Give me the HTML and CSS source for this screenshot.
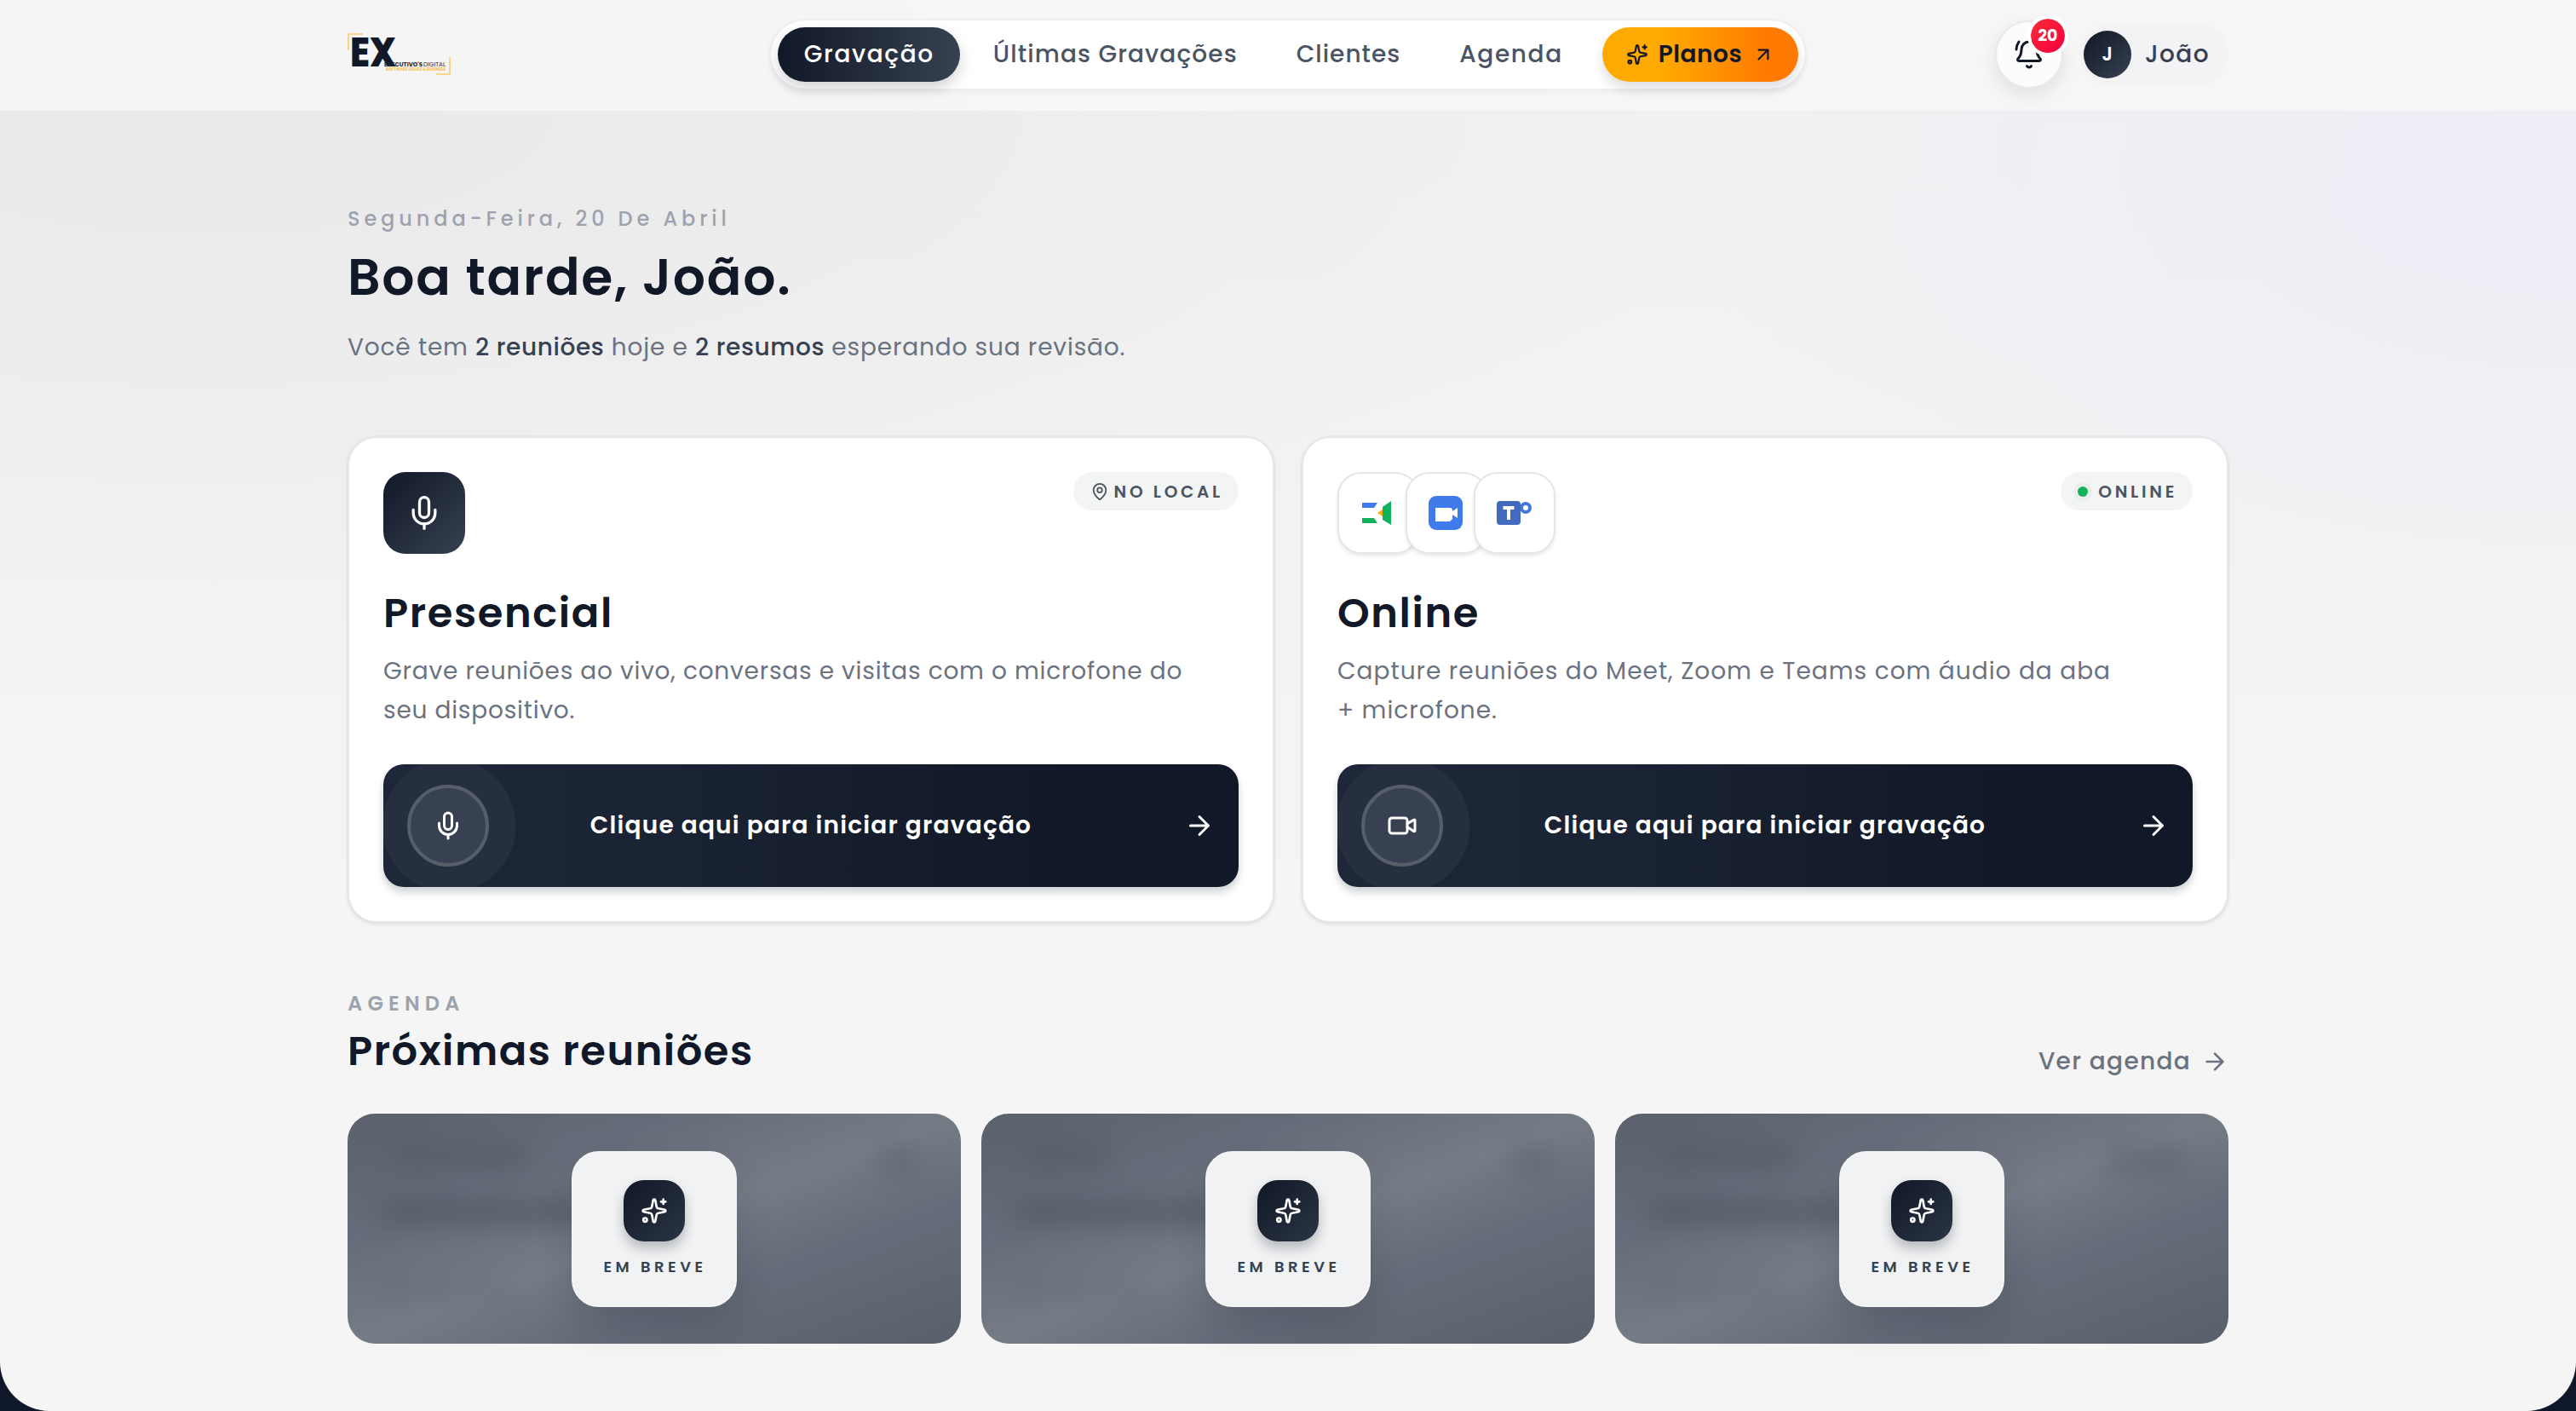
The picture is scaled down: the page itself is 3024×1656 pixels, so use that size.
FILE: index.html
```
<!DOCTYPE html>
<html lang="pt-BR">

<head>
    <meta charset="UTF-8">
    <meta name="viewport" content="width=device-width, initial-scale=1.0">
    <title>Executivo's Digital</title>
    <link rel="stylesheet" href="styles.css">
</head>

<body>
    <!-- Shared icons -->
    <svg width="0" height="0" class="sprite">
        <symbol id="i-sparkles" viewBox="0 0 24 24">
            <path d="M11.017 2.814a1 1 0 0 1 1.966 0l1.051 5.558a2 2 0 0 0 1.594 1.594l5.558 1.051a1 1 0 0 1 0 1.966l-5.558 1.051a2 2 0 0 0-1.594 1.594l-1.051 5.558a1 1 0 0 1-1.966 0l-1.051-5.558a2 2 0 0 0-1.594-1.594l-5.558-1.051a1 1 0 0 1 0-1.966l5.558-1.051a2 2 0 0 0 1.594-1.594z" />
            <path d="M20 2v4M22 4h-4" />
            <circle cx="4" cy="20" r="1.6" />
        </symbol>
        <symbol id="i-mic" viewBox="0 0 24 24">
            <path d="M12 19v3" />
            <path d="M19 10v2a7 7 0 0 1-14 0v-2" />
            <rect x="9" y="2" width="6" height="13" rx="3" />
        </symbol>
        <symbol id="i-video" viewBox="0 0 24 24">
            <path d="m16 13 5.223 3.482a.5.5 0 0 0 .777-.416V7.87a.5.5 0 0 0-.752-.432L16 10.5" />
            <rect x="2" y="6" width="14" height="12" rx="2" />
        </symbol>
        <symbol id="i-arrow" viewBox="0 0 24 24">
            <path d="M5 12h14M12 5l7 7-7 7" />
        </symbol>
        <symbol id="i-arrow-up" viewBox="0 0 24 24">
            <path d="M7 7h10v10M7 17 17 7" />
        </symbol>
        <symbol id="i-pin" viewBox="0 0 24 24">
            <path d="M20 10c0 4.993-5.539 10.193-7.399 11.799a1 1 0 0 1-1.202 0C9.539 20.193 4 14.993 4 10a8 8 0 0 1 16 0" />
            <circle cx="12" cy="10" r="3" />
        </symbol>
        <symbol id="i-bell" viewBox="0 0 24 24">
            <path d="M10.268 21a2 2 0 0 0 3.464 0M22 8c0-2.3-.8-4.3-2-6M4 2C2.8 3.7 2 5.7 2 8" />
            <path d="M3.262 15.326A1 1 0 0 0 4 17h16a1 1 0 0 0 .74-1.673C19.41 13.956 18 12.499 18 8A6 6 0 0 0 6 8c0 4.499-1.411 5.956-2.738 7.326" />
        </symbol>
    </svg>

    <div class="app">
        <header class="header">
            <div class="header-inner">
                <svg class="logo" viewBox="0 0 122 50">
                    <path d="M1 20V1h17M120 28v20h-16" class="logo-frame" />
                    <text x="3" y="39" textLength="54" lengthAdjust="spacingAndGlyphs" class="logo-ex">EX</text>
                    <text x="43" y="39" textLength="45" lengthAdjust="spacingAndGlyphs" class="logo-name">EXECUTIVO'S</text>
                    <text x="89" y="39" textLength="26" lengthAdjust="spacingAndGlyphs" class="logo-name light">DIGITAL</text>
                    <text x="45" y="43.5" textLength="70" lengthAdjust="spacingAndGlyphs" class="logo-tag">SOFTWARE HOUSE &amp; BUSINESS</text>
                </svg>

                <nav class="nav">
                    <a class="nav-item active">Gravação</a>
                    <a class="nav-item wide">Últimas Gravações</a>
                    <a class="nav-item clients">Clientes</a>
                    <a class="nav-item">Agenda</a>
                    <a class="nav-plans">
                        <svg class="icon"><use href="#i-sparkles" /></svg>
                        <span>Planos</span>
                        <svg class="icon"><use href="#i-arrow-up" /></svg>
                    </a>
                </nav>

                <div class="account">
                    <div class="bell">
                        <svg class="icon"><use href="#i-bell" /></svg>
                        <span class="badge">20</span>
                    </div>
                    <div class="user">
                        <span class="avatar">J</span>
                        <span>João</span>
                    </div>
                </div>
            </div>
        </header>

        <main class="main">
            <section class="hello">
                <p class="date">Segunda-Feira, 20 De Abril</p>
                <h1>Boa tarde, João.</h1>
                <p class="summary">Você tem <b>2 reuniões</b> hoje e <b>2 resumos</b> esperando sua revisão.</p>
            </section>

            <section class="modes">
                <article class="mode">
                    <div class="mode-top">
                        <div class="mode-icon">
                            <svg class="icon"><use href="#i-mic" /></svg>
                        </div>
                        <span class="chip"><svg class="icon"><use href="#i-pin" /></svg>NO LOCAL</span>
                    </div>
                    <h2>Presencial</h2>
                    <p>Grave reuniões ao vivo, conversas e visitas com o microfone do seu dispositivo.</p>
                    <button class="record">
                        <span class="record-icon"><svg class="icon"><use href="#i-mic" /></svg></span>
                        <span class="record-label">Clique aqui para iniciar gravação</span>
                        <svg class="icon arrow"><use href="#i-arrow" /></svg>
                    </button>
                </article>

                <article class="mode online">
                    <div class="mode-top">
                        <div class="apps">
                            <!-- Meet -->
                            <span class="app-tile"><svg viewBox="0 0 48 48">
                                    <path d="M5 12h18l-4 6H5z" fill="#3f7bea" />
                                    <path d="M5 30h14l4 6H5zM29 17l10-7v28l-10-6z" fill="#12b25c" />
                                    <path d="M23 24l6-4v8z" fill="#ffaa00" />
                                </svg></span>
                            <!-- Zoom -->
                            <span class="app-tile"><svg viewBox="0 0 48 48">
                                    <rect x="3" y="4" width="40" height="40" rx="9" fill="#3f7bea" />
                                    <path d="M11 18h17q3 0 3 3v1l6-4v12l-6-4v5l-3 3H11z" fill="#fff" />
                                </svg></span>
                            <!-- Teams -->
                            <span class="app-tile"><svg viewBox="0 0 48 48">
                                    <circle cx="37" cy="18" r="5" fill="none" stroke="#4377dc" stroke-width="4" />
                                    <rect x="3" y="10" width="28" height="28" rx="4" fill="#426bc0" />
                                    <path d="M10.500 16h13v4H19v12h-4V20h-4.500z" fill="#fff" />
                                </svg></span>
                        </div>
                        <span class="chip"><i class="dot"></i>ONLINE</span>
                    </div>
                    <h2>Online</h2>
                    <p>Capture reuniões do Meet, Zoom e Teams com áudio da aba + microfone.</p>
                    <button class="record">
                        <span class="record-icon"><svg class="icon"><use href="#i-video" /></svg></span>
                        <span class="record-label">Clique aqui para iniciar gravação</span>
                        <svg class="icon arrow"><use href="#i-arrow" /></svg>
                    </button>
                </article>
            </section>

            <section class="agenda">
                <div class="agenda-head">
                    <div>
                        <p class="eyebrow">AGENDA</p>
                        <h2>Próximas reuniões</h2>
                    </div>
                    <a class="see-all">Ver agenda <svg class="icon"><use href="#i-arrow" /></svg></a>
                </div>
                <div class="meetings">
                    <div class="meeting">
                        <i class="smudge time"></i><i class="smudge title"></i><i class="smudge foot"></i><i class="smudge tag"></i>
                        <div class="soon">
                            <span class="soon-icon"><svg class="icon"><use href="#i-sparkles" /></svg></span>
                            <span>EM BREVE</span>
                        </div>
                    </div>
                    <div class="meeting second">
                        <i class="smudge time"></i><i class="smudge title"></i><i class="smudge foot"></i><i class="smudge tag"></i>
                        <div class="soon">
                            <span class="soon-icon"><svg class="icon"><use href="#i-sparkles" /></svg></span>
                            <span>EM BREVE</span>
                        </div>
                    </div>
                    <div class="meeting third">
                        <i class="smudge time"></i><i class="smudge title"></i><i class="smudge foot"></i><i class="smudge tag"></i>
                        <div class="soon">
                            <span class="soon-icon"><svg class="icon"><use href="#i-sparkles" /></svg></span>
                            <span>EM BREVE</span>
                        </div>
                    </div>
                </div>
            </section>
        </main>
    </div>
</body>

</html>
```
FILE: styles.css
```
* {
    box-sizing: border-box;
    margin: 0;
    padding: 0;
}

body {
    background: #0f172a;
    font-family: Poppins, Inter, "Open Sans", sans-serif;
    color: #111827;
    overflow: hidden;
}

.sprite {
    position: absolute;
}

.app {
    height: 1656px;
    border-radius: 0 0 58px 58px;
    background:
        radial-gradient(ellipse 1500px 800px at 100% 12%, #ecedf6 0%, rgba(236, 237, 246, 0) 70%),
        radial-gradient(ellipse 1800px 640px at 8% 8%, #eaeaea 0%, #ececec 35%, rgba(238, 239, 241, 0) 100%),
        linear-gradient(#f0f0f1, #f5f5f5 65%);
}

.icon {
    fill: none;
    stroke: currentColor;
    stroke-width: 2;
    stroke-linecap: round;
    stroke-linejoin: round;
    flex: none;
}

/* Header */
.header {
    height: 130px;
    padding: 0 408px;
    background: rgba(248, 248, 248, 0.75);
}

.header-inner {
    height: 128px;
    display: grid;
    grid-template-columns: 1fr auto 1fr;
    align-items: center;
}

.logo {
    width: 122px;
    height: 50px;
}

.logo-frame {
    fill: none;
    stroke: #fbcb6b;
    stroke-width: 1.6;
}

.logo-ex {
    font-size: 48px;
    font-weight: 800;
    fill: #111827;
}

.logo-name {
    font-size: 7.5px;
    font-weight: 700;
    fill: #1f2937;
}

.logo-name.light {
    font-weight: 400;
}

.logo-tag {
    font-size: 4.5px;
    font-weight: 700;
    fill: #fbbf4a;
}

.nav {
    height: 84px;
    padding: 8px;
    display: flex;
    gap: 8px;
    border: 2px solid #efeff1;
    border-radius: 42px;
    background: #fff;
    background-clip: padding-box;
    box-shadow: 0 2px 6px rgba(17, 24, 39, 0.04);
    font-size: 28px;
    font-weight: 500;
    line-height: 64px;
    color: #4b5563;
    letter-spacing: 1.6px;
}

.nav-item {
    padding: 0 30px 0 31px;
    border-radius: 32px;
}

.nav-item.wide {
    letter-spacing: 1.1px;
}

.nav-item.clients {
    letter-spacing: 1px;
}

.nav-item.active {
    color: #fff;
    background: linear-gradient(90deg, #111827, #374151);
    box-shadow: 0 8px 16px rgba(17, 24, 39, 0.18);
}

.nav-plans {
    display: flex;
    align-items: center;
    gap: 12px;
    margin-left: 8px;
    padding: 0 28px;
    border-radius: 32px;
    background: linear-gradient(90deg, #ffaa00 30%, #ff7a00 85%);
    box-shadow: 0 8px 14px rgba(17, 24, 39, 0.14);
    color: #111827;
    font-weight: 600;
    letter-spacing: 0.5px;
}

.nav-plans .icon {
    width: 26px;
    height: 26px;
}

.account {
    display: flex;
    justify-content: flex-end;
    align-items: center;
    gap: 19px;
}

.bell {
    position: relative;
    width: 80px;
    height: 80px;
    display: flex;
    align-items: center;
    justify-content: center;
    border: 2px solid #e8e9eb;
    border-radius: 50%;
    background: #fcfcfc;
    box-shadow: 0 8px 20px rgba(17, 24, 39, 0.09);
}

.bell .icon {
    width: 36px;
    height: 36px;
}

.badge {
    position: absolute;
    top: -8px;
    right: -8px;
    width: 48px;
    height: 48px;
    border: 4px solid #fff;
    border-radius: 50%;
    background: linear-gradient(135deg, #fb2c36, #f4003f);
    background-clip: padding-box;
    color: #fff;
    font-size: 19px;
    font-weight: 700;
    line-height: 40px;
    text-align: center;
}

.user {
    height: 72px;
    display: flex;
    align-items: center;
    gap: 16px;
    padding: 0 22px 0 5px;
    border-radius: 36px;
    background: #f3f3f5;
    color: #374151;
    font-size: 28px;
    font-weight: 500;
    letter-spacing: 1.4px;
}

.avatar {
    width: 56px;
    height: 56px;
    border-radius: 50%;
    background: linear-gradient(135deg, #111827, #374151);
    color: #fff;
    font-size: 22px;
    font-weight: 600;
    line-height: 56px;
    text-align: center;
    letter-spacing: 0;
}

/* Greeting */
.main {
    padding: 109px 408px 0;
}

.hello {
    height: 273px;
}

.date {
    font-size: 24px;
    font-weight: 500;
    line-height: 36px;
    letter-spacing: 4.9px;
    color: #9ca3af;
}

.hello h1 {
    margin: 14px 0 25px;
    font-size: 60px;
    font-weight: 600;
    line-height: 72px;
    letter-spacing: 1.7px;
}

.summary {
    font-size: 28px;
    line-height: 44px;
    letter-spacing: 0.84px;
    color: #6b7280;
}

.summary b {
    font-weight: 500;
    color: #374151;
    letter-spacing: 0.6px;
}

/* Recording cards */
.modes {
    display: grid;
    grid-template-columns: 1fr 1fr;
    gap: 32px;
}

.mode {
    padding: 40px;
    border: 2px solid #e7e7e9;
    border-radius: 34px;
    background: #fff;
    box-shadow: 0 2px 5px rgba(17, 24, 39, 0.09), 0 0 0 1px rgba(17, 24, 39, 0.02);
}

.mode-top {
    display: flex;
    justify-content: space-between;
    align-items: flex-start;
    height: 96px;
}

.mode-icon {
    width: 96px;
    height: 96px;
    display: flex;
    align-items: center;
    justify-content: center;
    border-radius: 26px;
    background: linear-gradient(135deg, #111827, #374151);
    color: #fff;
}

.mode-icon .icon {
    width: 44px;
    height: 44px;
    stroke-width: 1.8;
}

.chip {
    height: 45px;
    display: flex;
    align-items: center;
    gap: 6px;
    padding: 0 18px 0 20px;
    border-radius: 23px;
    background: #f3f4f4;
    color: #4b5563;
    font-size: 20px;
    font-weight: 600;
    letter-spacing: 3.7px;
}

.chip .icon {
    width: 22px;
    height: 22px;
}

.dot {
    width: 12px;
    height: 12px;
    margin-right: 6px;
    border-radius: 50%;
    background: #12b25c;
    box-shadow: 0 0 0 5px rgba(18, 100, 60, 0.04);
}

.apps {
    display: flex;
}

.app-tile {
    width: 96px;
    height: 96px;
    padding: 22px;
    border: 2px solid #e5e6e8;
    border-radius: 28px;
    background: #fff;
    box-shadow: 0 3px 4px rgba(17, 24, 39, 0.09);
}

.app-tile + .app-tile {
    margin-left: -16px;
}

.app-tile svg {
    display: block;
    width: 48px;
    height: 48px;
}

.mode h2 {
    margin: 40px 0 15px;
    font-size: 48px;
    font-weight: 600;
    line-height: 60px;
    letter-spacing: 1.6px;
}

.mode p {
    width: 990px;
    font-size: 28px;
    line-height: 45.5px;
    letter-spacing: 0.78px;
    color: #6b7280;
}

.mode.online p {
    width: 910px;
    letter-spacing: 1px;
}

.record {
    position: relative;
    width: 100%;
    height: 144px;
    margin-top: 41px;
    padding: 0 28px;
    display: grid;
    grid-template-columns: 96px 1fr 96px;
    align-items: center;
    border: 0;
    border-radius: 24px;
    overflow: hidden;
    background: radial-gradient(circle 79px at 77px 50%, #262f3d 98.500%, transparent 100%),
        linear-gradient(90deg, #1d2737, #1a2333 35%, #111827 80%);
    box-shadow: 0 6px 10px rgba(17, 24, 39, 0.2);
    color: #fff;
    font-family: inherit;
}

.record-icon {
    width: 96px;
    height: 96px;
    display: flex;
    align-items: center;
    justify-content: center;
    border: 4px solid #565e69;
    border-radius: 50%;
    background: #374151;
}

.record .icon {
    width: 36px;
    height: 36px;
}

.record-label {
    font-size: 28px;
    font-weight: 600;
    letter-spacing: 1.2px;
}

.record .arrow {
    justify-self: end;
}

/* Agenda */
.agenda-head {
    display: flex;
    justify-content: space-between;
    align-items: flex-end;
    height: 107px;
    margin: 77px 0 40px;
}

.agenda-head > div {
    height: 107px;
}

.eyebrow {
    font-size: 24px;
    font-weight: 600;
    line-height: 36px;
    letter-spacing: 6.2px;
    color: #9ca3af;
}

.agenda-head h2 {
    margin-top: 8px;
    font-size: 48px;
    font-weight: 600;
    line-height: 60px;
    letter-spacing: 1.5px;
}

.see-all {
    display: flex;
    align-items: center;
    gap: 12px;
    font-size: 28px;
    font-weight: 500;
    line-height: 42px;
    letter-spacing: 1.3px;
    color: #6b7280;
}

.see-all .icon {
    width: 32px;
    height: 32px;
}

.meetings {
    display: grid;
    grid-template-columns: repeat(3, 1fr);
    gap: 24px;
}

.meeting {
    position: relative;
    height: 270px;
    display: flex;
    align-items: center;
    justify-content: center;
    border-radius: 32px;
    background: linear-gradient(to bottom right, #5a606c, #666c79 28%, #757c86 50%, #666c79 68%, #59606c);
}

/* Blurred content under the "em breve" overlay */
.smudge {
    position: absolute;
    border-radius: 20px;
    background: #535b67;
    filter: blur(14px);
}

.smudge.time {
    left: 50px;
    top: 36px;
    width: 165px;
    height: 28px;
    opacity: 0.6;
}

.smudge.title {
    left: 36px;
    top: 100px;
    width: 250px;
    height: 30px;
    opacity: 0.75;
}

.smudge.foot {
    left: 36px;
    top: 196px;
    width: 160px;
    height: 24px;
    opacity: 0.2;
}

.smudge.tag {
    right: 48px;
    top: 38px;
    width: 50px;
    height: 36px;
    opacity: 0.4;
}

.second .smudge.time {
    width: 100px;
}

.third .smudge.tag {
    width: 96px;
}

.soon {
    position: relative;
    width: 194px;
    height: 183px;
    padding: 32px 0 0;
    display: flex;
    flex-direction: column;
    align-items: center;
    gap: 16px;
    border: 2px solid #f5f5f6;
    border-radius: 32px;
    background: #f1f2f3;
    box-shadow: 0 24px 50px -8px rgba(17, 24, 39, 0.2);
    color: #374151;
    font-size: 18px;
    font-weight: 600;
    line-height: 27px;
    letter-spacing: 4.5px;
    text-indent: 2px;
    white-space: nowrap;
}

.soon-icon {
    width: 72px;
    height: 72px;
    display: flex;
    align-items: center;
    justify-content: center;
    border-radius: 24px;
    background: linear-gradient(135deg, #111827, #2b3545);
    box-shadow: 0 8px 14px rgba(17, 24, 39, 0.26);
    color: #fff;
}

.soon-icon .icon {
    width: 32px;
    height: 32px;
}
```
